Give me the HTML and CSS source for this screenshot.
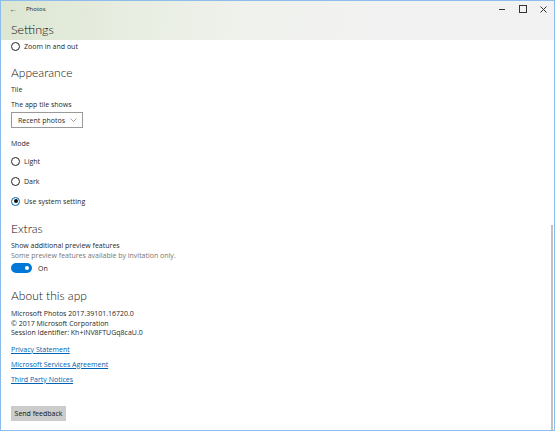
FILE: index.html
```html
<!DOCTYPE html>
<html>
<head>
<meta charset="utf-8">
<link rel="stylesheet" href="styles.css">
</head>
<body>
<div class="window">
  <div class="top">
    <div class="titlebar">
      <span class="back">&#8592;</span>
      <span class="appname">Photos</span>
      <span class="spacer"></span>
      <span class="ctrl min"></span>
      <span class="ctrl max"></span>
      <span class="ctrl close"><svg width="7" height="7" viewBox="0 0 7 7"><path d="M0.5 0.5L6.5 6.5M6.5 0.5L0.5 6.5" stroke="#333" stroke-width="1"/></svg></span>
    </div>
    <div class="pagetitle">Settings</div>
  </div>
  <div class="body">
    <div class="content">
      <div class="radio r-zoom"><span class="circle"></span><span>Zoom in and out</span></div>

      <div class="heading h-appearance">Appearance</div>
      <div class="label l-tile">Tile</div>
      <div class="label l-shows">The app tile shows</div>
      <div class="dropdown"><span>Recent photos</span><svg width="7" height="4" viewBox="0 0 7 4"><path d="M0.5 0.5L3.5 3.5L6.5 0.5" fill="none" stroke="#777" stroke-width="0.7"/></svg></div>
      <div class="label l-mode">Mode</div>
      <div class="radio r-light"><span class="circle"></span><span>Light</span></div>
      <div class="radio r-dark"><span class="circle"></span><span>Dark</span></div>
      <div class="radio r-system"><span class="circle checked"></span><span>Use system setting</span></div>

      <div class="heading h-extras">Extras</div>
      <div class="label l-show">Show additional preview features</div>
      <div class="label sub">Some preview features available by invitation only.</div>
      <div class="toggle-row"><span class="toggle"><span class="knob"></span></span><span>On</span></div>

      <div class="heading h-about">About this app</div>
      <div class="info">
        <div>Microsoft Photos 2017.39101.16720.0</div>
        <div>© 2017 Microsoft Corporation</div>
        <div>Session Identifier: Kh+iNV8FTUGq8caU.0</div>
      </div>
      <a class="link l-privacy" href="#">Privacy Statement</a>
      <a class="link l-services" href="#">Microsoft Services Agreement</a>
      <a class="link l-third" href="#">Third Party Notices</a>

      <div class="button">Send feedback</div>
    </div>
    <div class="scroll"><div class="thumb"></div></div>
  </div>
</div>
</body>
</html>
```
FILE: styles.css
```css
* { box-sizing: border-box; }
html, body { margin: 0; padding: 0; }
body {
  width: 555px;
  height: 431px;
  overflow: hidden;
  font-family: "Open Sans", "Noto Sans", sans-serif;
  font-size: 7px;
  color: #1f1f1f;
  background: #fff;
}
.window {
  width: 555px;
  height: 431px;
  border: 1px solid #8cbdec;
  display: flex;
  flex-direction: column;
}
.top {
  height: 39px;
  flex: none;
  background: linear-gradient(100deg, #dce6d1 0%, #e7ede0 22%, #f0f2ed 45%, #f2f2f2 70%);
}
.titlebar {
  height: 16px;
  display: flex;
  align-items: center;
}
.back {
  width: 10px;
  margin-left: 8px;
  font-size: 8px;
  line-height: 10px;
  color: #333;
}
.appname {
  margin-left: 7px;
  font-size: 6px;
  color: #222;
}
.spacer { flex: 1; }
.ctrl {
  width: 21px;
  height: 16px;
  display: flex;
  align-items: center;
  justify-content: center;
}
.min::before {
  content: "";
  width: 6px;
  height: 1px;
  background: #333;
}
.max::before {
  content: "";
  width: 6px;
  height: 6px;
  border: 1px solid #333;
}
.pagetitle {
  padding-left: 10px;
  margin-top: 5px;
  font-family: "Lato", "Open Sans", sans-serif;
  font-size: 12.5px;
  line-height: 16px;
  font-weight: 300;
  color: #111;
}
.body {
  flex: 1;
  display: flex;
  min-height: 0;
}
.content {
  flex: 1;
  padding-left: 10px;
  display: flex;
  flex-direction: column;
  align-items: flex-start;
}
.radio {
  height: 12px;
  display: flex;
  align-items: center;
  gap: 4px;
}
.circle {
  width: 9px;
  height: 9px;
  border: 1px solid #222;
  border-radius: 50%;
  display: flex;
  align-items: center;
  justify-content: center;
}
.circle.checked { border-color: #0063b1; }
.circle.checked::after {
  content: "";
  width: 4px;
  height: 4px;
  border-radius: 50%;
  background: #111;
}
.heading {
  height: 18px;
  line-height: 18px;
  font-family: "Lato", "Open Sans", sans-serif;
  font-size: 12px;
  font-weight: 300;
  color: #111;
}
.label { height: 10px; line-height: 10px; }
.h-appearance { margin-top: 12px; }
.l-tile { margin-top: 3px; }
.l-shows { margin-top: 5px; }
.dropdown {
  margin-top: 2px;
  width: 72px;
  height: 16px;
  border: 1px solid #999;
  display: flex;
  align-items: center;
  justify-content: space-between;
  padding: 0 5px 0 6px;
}
.l-mode { margin-top: 11px; }
.r-light { margin-top: 6px; }
.r-dark { margin-top: 8px; }
.r-system { margin-top: 8px; }
.h-extras { margin-top: 13px; }
.l-show { margin-top: 3px; }
.label.sub { color: #767676; height: 9px; line-height: 9px; }
.toggle-row {
  margin-top: 3px;
  height: 10px;
  display: flex;
  align-items: center;
  gap: 6px;
}
.toggle {
  width: 21px;
  height: 10px;
  border-radius: 5px;
  background: #0078d7;
  display: flex;
  align-items: center;
  justify-content: flex-end;
  padding-right: 3px;
}
.knob {
  width: 4px;
  height: 4px;
  border-radius: 50%;
  background: #fff;
}
.h-about { margin-top: 14px; }
.info { margin-top: 4px; line-height: 9.5px; }
.link {
  height: 10px;
  line-height: 10px;
  color: #0063b1;
  text-decoration: underline;
}
.l-privacy { margin-top: 7px; }
.l-services { margin-top: 5px; }
.l-third { margin-top: 5px; }
.button {
  margin-top: 21px;
  width: 55px;
  height: 15px;
  line-height: 15px;
  text-align: center;
  background: #cccccc;
  color: #111;
}
.scroll {
  width: 4px;
  flex: none;
  display: flex;
  flex-direction: column;
  justify-content: flex-end;
}
.thumb {
  width: 2px;
  height: 205px;
  margin-left: 1px;
  background: #c2c2c2;
}
```
